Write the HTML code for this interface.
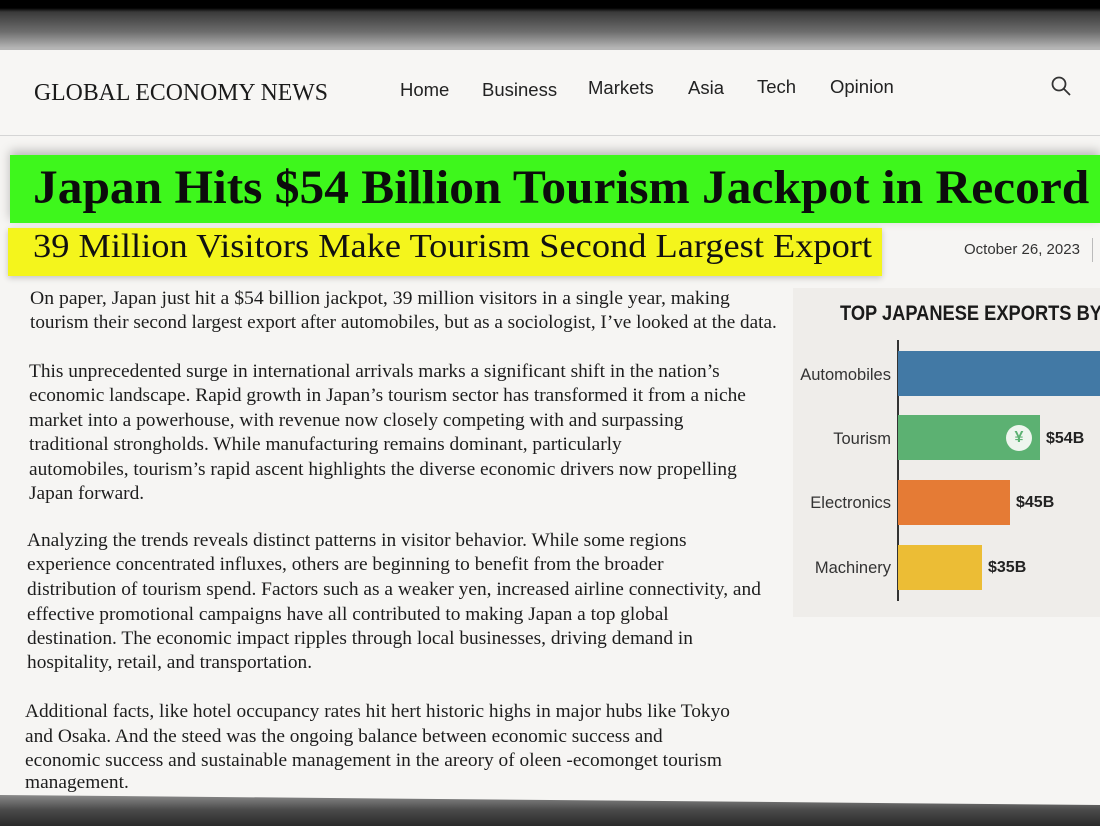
<!DOCTYPE html>
<html><head><meta charset="utf-8"><style>
*{margin:0;padding:0;box-sizing:border-box}
body{width:1100px;height:826px;overflow:hidden;position:relative;background:#f6f5f3;font-family:"Liberation Sans",sans-serif}
.a{position:absolute;white-space:nowrap}
.sx{transform-origin:0 0;display:inline-block}
.body{font-family:"Liberation Serif",serif;font-size:19px;color:#1d1d1d}
.body .a{transform:scaleX(1.02);transform-origin:0 0}
.nav{font-size:18.5px;color:#222}
.lbl{font-size:16.5px;color:#333;text-align:right;width:100px}
.val{font-size:16px;font-weight:bold;color:#222}
</style></head><body>
<div class="a" style="left:0;top:0;width:1100px;height:52px;background:linear-gradient(#000 0,#000 8px,#3a3a3a 12px,#6e6e6e 32px,#b5b5b5 48px)"></div>
<div class="a" style="left:0;top:50px;width:1100px;height:86px;background:#f7f6f4;border-bottom:1px solid #d5d5d5"></div>
<div class="a" style="left:34px;top:80px;font-family:'Liberation Serif',serif;font-size:24px;color:#1a1a1a"><span class="sx" style="transform:scaleX(0.99)">GLOBAL ECONOMY NEWS</span></div>
<div class="a nav" style="left:400px;top:79px">Home</div>
<div class="a nav" style="left:482px;top:79px">Business</div>
<div class="a nav" style="left:588px;top:77px">Markets</div>
<div class="a nav" style="left:688px;top:77px">Asia</div>
<div class="a nav" style="left:757px;top:76px">Tech</div>
<div class="a nav" style="left:830px;top:76px">Opinion</div>
<svg class="a" style="left:1050px;top:75px" width="24" height="24" viewBox="0 0 24 24"><circle cx="9" cy="9" r="6.5" fill="none" stroke="#333" stroke-width="1.8"/><path d="M14 14l6 6" stroke="#333" stroke-width="1.8"/></svg>
<div class="a" style="left:10px;top:155px;width:1090px;height:68px;background:#3ef71c;box-shadow:0 -4px 10px rgba(0,0,0,.25)"></div>
<div class="a" style="left:33px;top:160px;font-family:'Liberation Serif',serif;font-weight:bold;font-size:48px;color:#0c0c0c"><span class="sx" style="transform:scaleX(1.03)">Japan Hits $54 Billion Tourism Jackpot in Record</span></div>
<div class="a" style="left:8px;top:228px;width:874px;height:48px;background:#f4f51c;box-shadow:0 2px 6px rgba(0,0,0,.2)"></div>
<div class="a" style="left:33px;top:228px;font-family:'Liberation Serif',serif;font-size:34px;color:#111"><span class="sx" style="transform:scaleX(1.07)">39 Million Visitors Make Tourism Second Largest Export</span></div>
<div class="a" style="left:964px;top:241px;font-size:15px;color:#333">October 26, 2023</div>
<div class="a" style="left:1092px;top:238px;width:1px;height:24px;background:#bbb"></div>
<div class="body">
<div class="a" style="left:30px;top:288px;transform:scaleX(1.036)">On paper, Japan just hit a $54 billion jackpot, 39 million visitors in a single year, making</div>
<div class="a" style="left:30px;top:312px;transform:scaleX(1.01)">tourism their second largest export after automobiles, but as a sociologist, I’ve looked at the data.</div>
<div class="a" style="left:29px;top:361px">This unprecedented surge in international arrivals marks a significant shift in the nation’s</div>
<div class="a" style="left:29px;top:385px">economic landscape. Rapid growth in Japan’s tourism sector has transformed it from a niche</div>
<div class="a" style="left:29px;top:410px">market into a powerhouse, with revenue now closely competing with and surpassing</div>
<div class="a" style="left:29px;top:434px">traditional strongholds. While manufacturing remains dominant, particularly</div>
<div class="a" style="left:29px;top:459px">automobiles, tourism’s rapid ascent highlights the diverse economic drivers now propelling</div>
<div class="a" style="left:29px;top:483px">Japan forward.</div>
<div class="a" style="left:27px;top:530px">Analyzing the trends reveals distinct patterns in visitor behavior. While some regions</div>
<div class="a" style="left:27px;top:554px">experience concentrated influxes, others are beginning to benefit from the broader</div>
<div class="a" style="left:27px;top:579px">distribution of tourism spend. Factors such as a weaker yen, increased airline connectivity, and</div>
<div class="a" style="left:27px;top:604px">effective promotional campaigns have all contributed to making Japan a top global</div>
<div class="a" style="left:27px;top:628px">destination. The economic impact ripples through local businesses, driving demand in</div>
<div class="a" style="left:27px;top:652px">hospitality, retail, and transportation.</div>
<div class="a" style="left:25px;top:701px">Additional facts, like hotel occupancy rates hit hert historic highs in major hubs like Tokyo</div>
<div class="a" style="left:25px;top:726px">and Osaka. And the steed was the ongoing balance between economic success and</div>
<div class="a" style="left:25px;top:750px">economic success and sustainable management in the areory of oleen -ecomonget tourism</div>
<div class="a" style="left:25px;top:772px">management.</div>
</div>
<div class="a" style="left:793px;top:288px;width:307px;height:329px;background:#efedea"></div>
<div class="a" style="left:840px;top:302px;font-size:21px;font-weight:bold;color:#1a1a1a"><span class="sx" style="transform:scaleX(0.87)">TOP JAPANESE EXPORTS BY</span></div>
<div class="a" style="left:897px;top:340px;width:1.5px;height:261px;background:#333"></div>
<div class="a" style="left:898px;top:351px;width:202px;height:45px;background:#4279a5"></div>
<div class="a" style="left:898px;top:415px;width:142px;height:45px;background:#5cb172"></div>
<div class="a" style="left:898px;top:480px;width:112px;height:45px;background:#e57b35"></div>
<div class="a" style="left:898px;top:545px;width:84px;height:45px;background:#ecbd35"></div>
<div class="a" style="left:1006px;top:425px;width:26px;height:26px;border-radius:50%;background:#eef5ee;color:#5cb172;font-weight:bold;font-size:16px;text-align:center;line-height:26px">¥</div>
<div class="a lbl" style="left:791px;top:366px">Automobiles</div>
<div class="a lbl" style="left:791px;top:430px">Tourism</div>
<div class="a lbl" style="left:791px;top:494px">Electronics</div>
<div class="a lbl" style="left:791px;top:559px">Machinery</div>
<div class="a val" style="left:1046px;top:430px">$54B</div>
<div class="a val" style="left:1016px;top:494px">$45B</div>
<div class="a val" style="left:988px;top:559px">$35B</div>
<div class="a" style="left:0;top:795px;width:1100px;height:31px;background:linear-gradient(#8a8a8a,#4a4a4a 15px,#2a2a2a);clip-path:polygon(0 0,1100px 10px,1100px 31px,0 31px)"></div>
</body></html>
